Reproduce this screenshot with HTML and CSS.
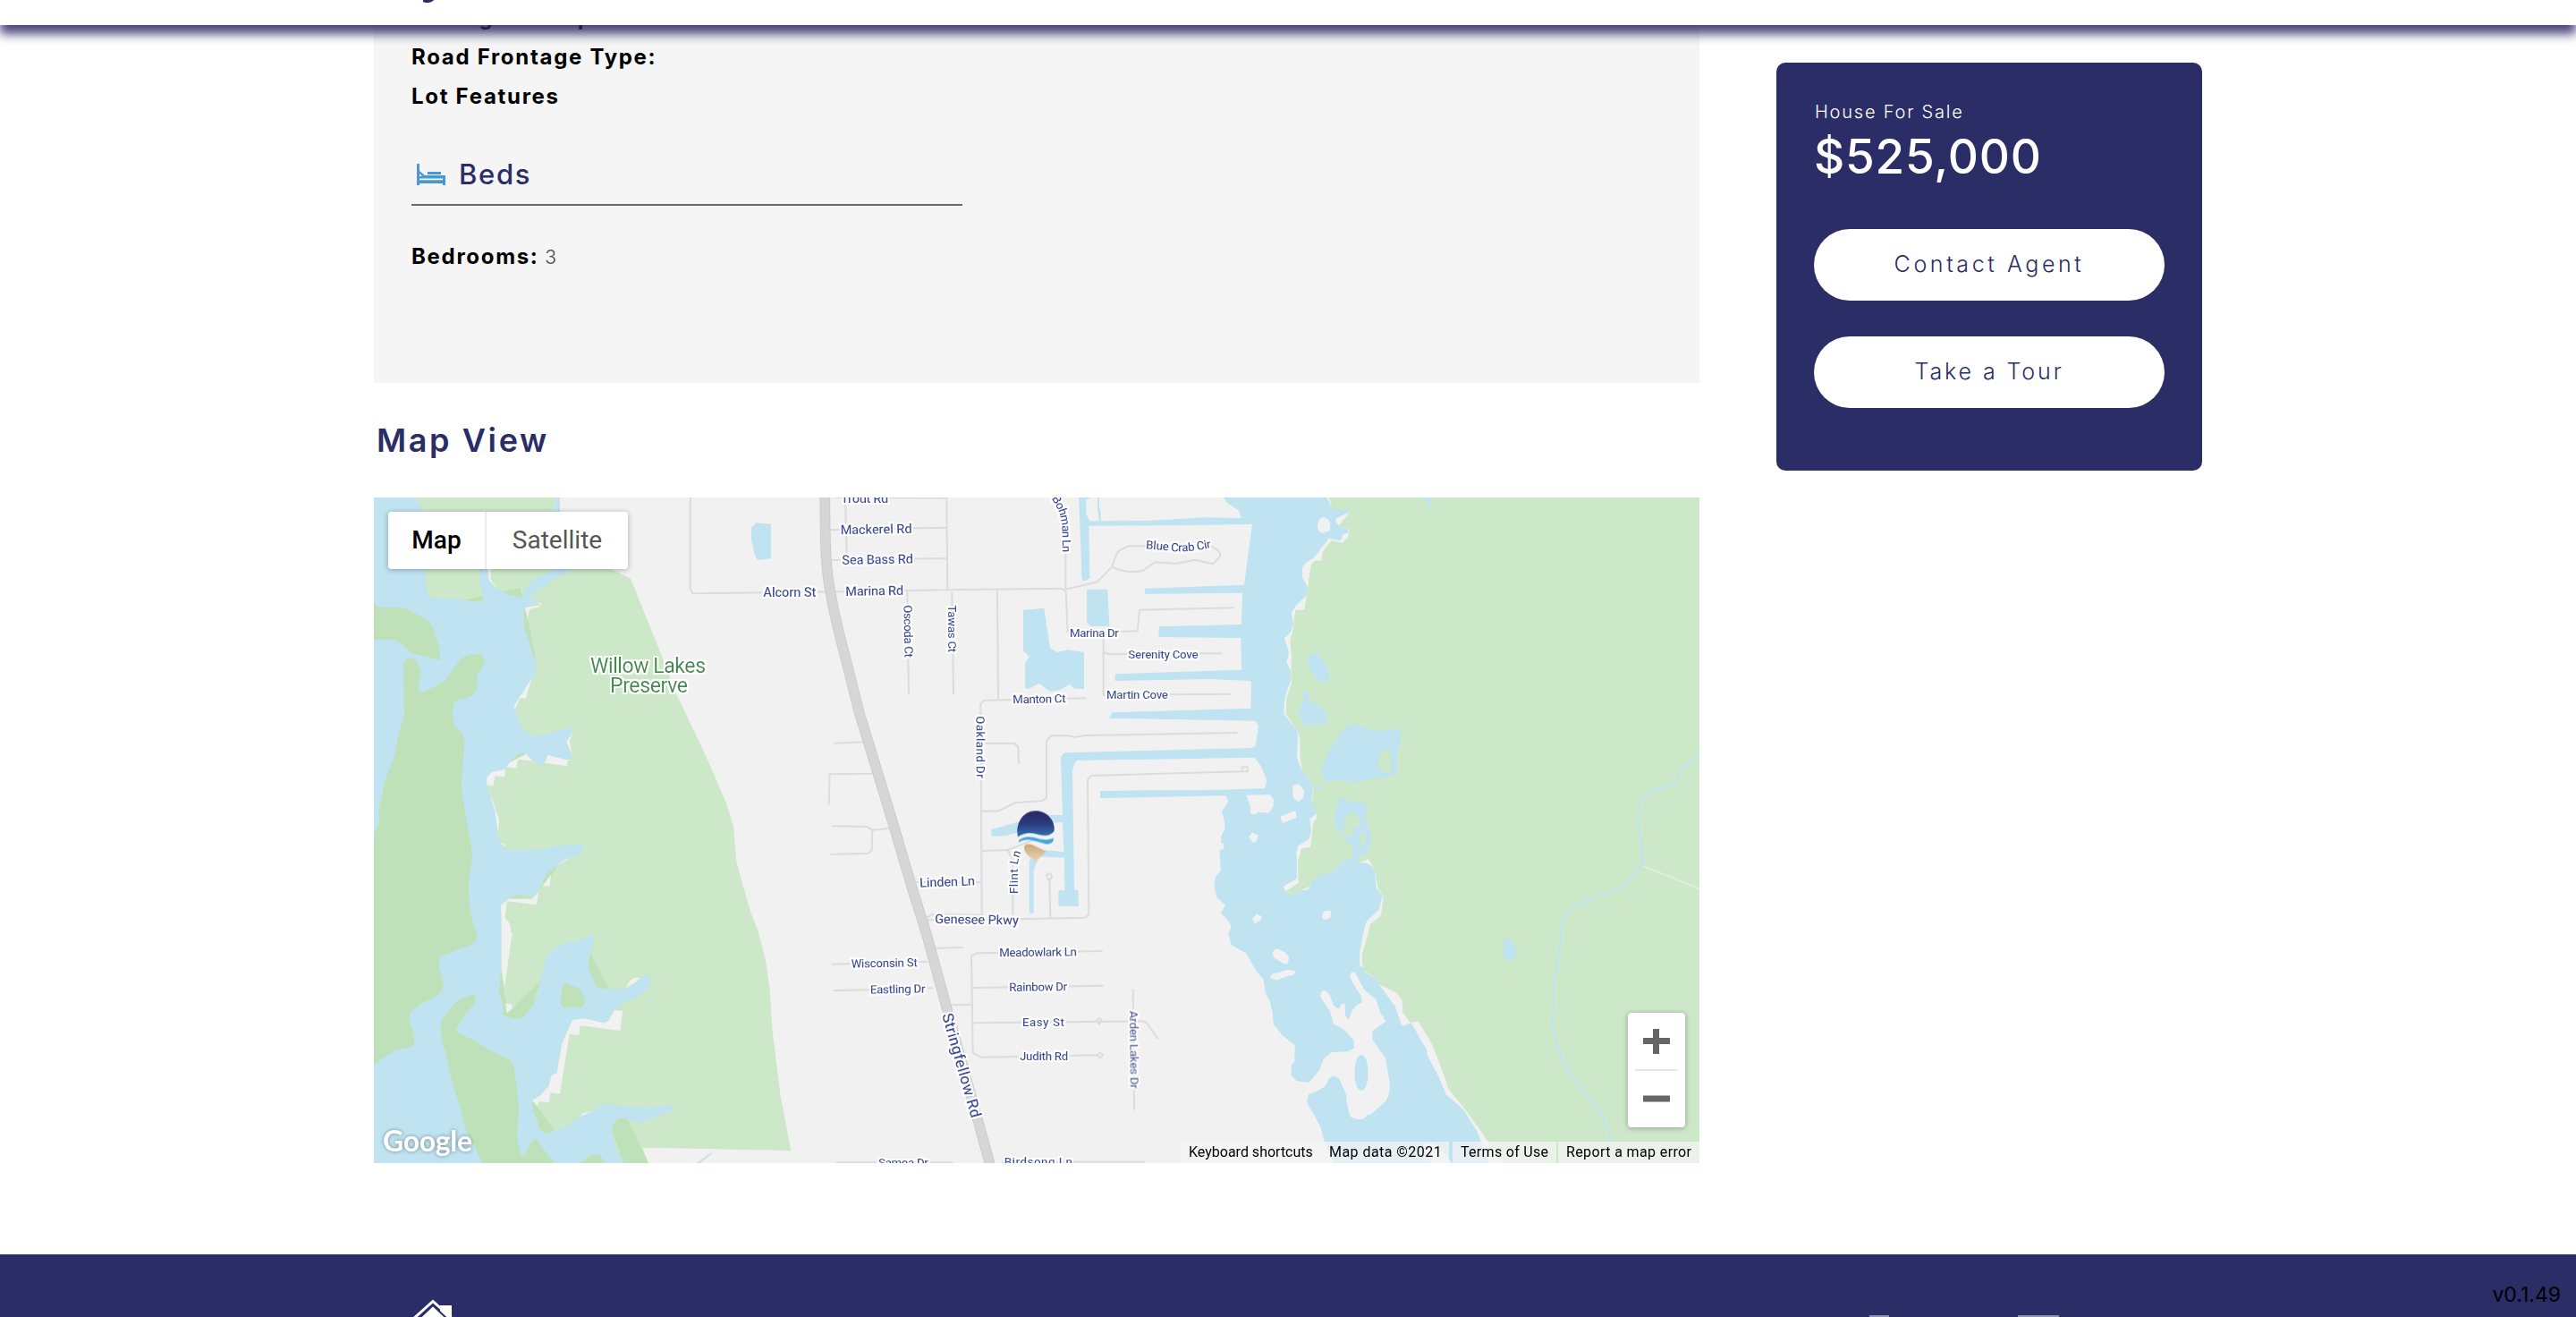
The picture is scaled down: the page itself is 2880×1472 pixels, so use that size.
FILE: index.html
```html
<!DOCTYPE html>
<html lang="en">
<head>
<meta charset="utf-8">
<title>House For Sale</title>
<link rel="stylesheet" href="styles.css">
</head>
<body>
<header class="site-header">
  <svg class="brand-tail" viewBox="0 0 12 3" aria-hidden="true"><path d="M0 0C2 2.200 8 2.200 11-1" fill="none" stroke="#2b2d67" stroke-width="3"/></svg>
</header>

<main class="listing">
  <div class="details">
    <section class="facts">
      <ul class="fact-list fact-list--lot">
        <li><b>Zoning Description:</b></li>
        <li><b>Road Frontage Type:</b></li>
        <li><b>Lot Features</b></li>
      </ul>
      <h3 class="fact-heading">
        <svg class="bed" viewBox="0 0 32 24" aria-hidden="true"><path fill="#4a98d3" d="M0 0h3v8l6 5h23v11h-3v-2H3v2H0zM3 17v1h26v-1zM12 9h15v3H12z"/><path fill="#f5f5f5" d="M3 11l3 3H3zM3 16.6h26v1.6H3z"/></svg>
        <span>Beds</span>
      </h3>
      <ul class="fact-list">
        <li><b>Bedrooms:</b> <span class="value">3</span></li>
      </ul>
    </section>

    <h2 class="map-title">Map View</h2>

    <div class="map">
      <svg class="map-canvas" viewBox="418 556 1482 744" aria-label="Map">
        <defs>
          <linearGradient id="sky" x1="0" y1="0" x2="0" y2="1"><stop offset="0" stop-color="#292763"/><stop offset=".5" stop-color="#2c3b7f"/><stop offset="1" stop-color="#2f76b7"/></linearGradient>
          <linearGradient id="sand" x1="0" y1="0" x2="0" y2="1"><stop offset="0" stop-color="#cda671"/><stop offset="1" stop-color="#e8d9c6"/></linearGradient>
          <filter id="halo" filterUnits="userSpaceOnUse" x="418" y="556" width="1482" height="744">
            <feMorphology in="SourceAlpha" operator="dilate" radius="2" result="fat"/>
            <feGaussianBlur in="fat" stdDeviation=".7" result="soft"/>
            <feFlood flood-color="#fff" flood-opacity=".92"/>
            <feComposite in2="soft" operator="in" result="glow"/>
            <feMerge><feMergeNode in="glow"/><feMergeNode in="SourceGraphic"/></feMerge>
          </filter>
          <path id="bohman" d="M826 22Q856 60 862 115L864 215"/>
          <path id="bluecrab" d="M543 191Q585 192 632 199Q690 203 775 184"/>
          <path id="flint" d="M713 1347L713 1265Q712 1235 732 1190"/>
        </defs>
        <rect class="land" x="418" y="556" width="1482" height="744"/>

        <g transform="translate(410 550) scale(.33333)">
          <path class="park" d="M24 18H632V258H820L885 290 990 550 1040 680 1140 890 1205 1040 1230 1120 1240 1240 1285 1400 1312 1470 1338 1570 1352 1670 1360 1800 1388 2025 1423 2208 925 2198 945 2250H24z"/>
          <path class="water" d="M632 18H648V100H632z"/>
          <path class="water" d="M24 18H165L190 65 193 258 205 350Q245 355 300 357L385 370 393 355Q376 300 375 258H405L410 295 435 325 475 345 522 355Q530 320 570 285L640 255H695L640 285 570 330 540 355 565 357 575 372 530 388 523 410 530 460 550 520 572 588 560 620 495 715 505 750 522 795 555 817 600 812 650 800 685 790 692 803 670 838 685 875 690 893 665 897 610 882 590 915H575L535 878 510 875 480 905 462 935 420 938 403 957V985L415 1020 430 1070 440 1130 442 1160 455 1185 475 1201 590 1197 670 1183 722 1182 729 1198 718 1212 680 1228 640 1250Q605 1285 580 1330L555 1360Q510 1340 475 1362L450 1385 452 1430V1600L443 1680 455 1710 458 1755 495 1767 525 1762 558 1720Q575 1690 590 1600L605 1555 630 1530 665 1510 715 1505 760 1480 762 1515 745 1550 742 1590 768 1658 820 1667 870 1665 905 1642 935 1617 948 1620 952 1640 945 1667 910 1692 860 1712 830 1737 812 1772 795 1780 730 1765 690 1770 685 1795 670 1815 655 1850 645 1900 638 1948 620 1955 610 1993 580 2025 555 2040 558 2080 572 2105 580 2137 605 2151 630 2143 680 2120 720 2090 760 2072 805 2050 880 2060 940 2063 1020 2054 1030 2068 985 2090 920 2115 860 2099 823 2145 830 2185 862 2250H24z"/>
          <path class="marsh" d="M24 370L40 387Q100 385 130 389L205 430 225 460 245 530 247 565 150 540Q110 500 90 495H24z"/>
          <path class="marsh" d="M123 570Q145 543 165 562L182 605 172 665 185 672Q235 650 265 630L310 565Q330 547 350 543L388 545 396 572 372 610 368 660Q360 682 345 687L295 702 288 735 293 785 318 803 329 835 318 980 320 1010 342 1140Q357 1210 352 1240L342 1310 345 1390 355 1440 370 1485 366 1505 350 1520 300 1537 245 1560 242 1590 257 1645 255 1670 225 1695 180 1717 148 1742 142 1770 157 1815 160 1850 145 1862 90 1875 45 1905 24 1922V1145L42 1110 40 1070 60 970 95 880 105 820 125 745z"/>
          <path class="marsh" d="M355 1685L366 1692 363 1715 330 1750 300 1802 302 1812 355 1835 420 1875 480 1903 493 1925 503 1990 511 2080 503 2160 517 2222 530 2225 550 2180 570 2167 590 2200 628 2245V2250H390L345 2165 330 2130 315 2070 290 1990 268 1900V1885L253 1845Q245 1800 252 1770L280 1730 310 1702z"/>
          <path class="marsh" d="M655 1658Q670 1638 680 1650L718 1668 732 1700Q735 1722 715 1729H665Q645 1725 652 1700zM715 2250L745 2225Q765 2218 783 2223L800 2250zM862 2250L823 2145 825 2125Q835 2095 870 2100L878 2108 945 2250zM450 1600L460 1670 475 1745 583 1638 558 1720 525 1762 495 1767 458 1755 455 1710 443 1680zM750 1545L812 1667 768 1658 742 1590zM555 2040L632 2143 605 2151 580 2137 572 2105 558 2080zM323 362L390 348 393 358 385 370zM455 332L515 322 522 355 475 345zM525 395L540 420 572 588 550 520 530 460zM605 1278L645 1247 610 1300 580 1330zM475 1362Q510 1340 555 1360zM480 905L510 875 535 878z"/>
          <path class="land" d="M532 388L588 377 578 368 580 385 546 393 540 427zM553 625L533 692 515 690 497 728 495 715zM692 803L680 838 690 880 670 838zM690 897L674 899 672 918 597 908 608 882 665 897zM480 907L535 878 557 902 508 896 502 926 470 922zM420 938L465 930 463 955 430 952 424 985 403 982V957zM413 1018L420 1030 445 1100 440 1140 430 1070zM450 1178L462 1180V1188zM618 1283L614 1322 590 1320zM640 1250L685 1225 665 1232zM475 1365H555L576 1340 570 1384 470 1372 464 1428Q485 1445 483 1475L488 1480 462 1660 452 1600V1430L450 1385zM466 1715L488 1718V1730L470 1747zM870 1663Q885 1620 915 1630L905 1642zM830 1737L858 1740 850 1806 715 1788 712 1821 680 1817 648 2018 616 2014 612 2047 577 2043 573 2058 555 2040 580 2025 610 1993 620 1955 638 1948 655 1850 670 1815 690 1770 730 1765 795 1780 812 1772zM185 65L190 75V60zM405 258L418 258 415 290 438 325 410 295zM715 2095L725 2083 755 2077z"/>
          <path class="water" d="M1290 120L1305 103 1356 107V223L1310 227 1300 205 1290 160zM1105 2250L1155 2215 1160 2217 1118 2250z"/>
        </g>

        <g transform="translate(1100 550) scale(.33333)">
          <path class="park" d="M1158 18L1168 57 1222 60V75L1190 112 1226 125 1222 150 1203 170 1165 162 1136 200 1132 230H1110L1097 245 1075 395H1045L1035 470 1027 500 1032 550 1030 590 1032 640 1015 690 1013 745 1050 800 1060 820V880L1068 935 1105 985 1102 1040 1118 1090 1105 1110 1095 1190 1065 1195 1053 1240 1055 1310 1010 1340 1032 1354 1060 1337 1290 1230 1311 1270 1322 1330 1340 1355 1332 1420 1295 1450 1285 1495 1268 1550 1270 1600 1320 1635 1325 1650 1385 1680 1403 1705 1405 1745 1430 1778 1458 1775 1505 1855 1530 1920 1560 2005 1610 2065 1665 2140 1740 2250H2400V18z"/>
          <path class="water" d="M318 18L325 180 328 285 333 297H343L355 287 352 113 620 112 900 108 873 311 540 323V343L560 341 868 338 863 444 588 451 586 486 862 489 864 596 440 610V633L760 627 893 633 897 640 895 725 430 739 421 758 910 767 921 783 911 852 900 858 270 874 258 888 264 1083 220 1083 110 1107 25 1132V1154L75 1152 130 1138 210 1110 264 1107 268 1207 200 1200 160 1228 152 1235V1412H167V1270L185 1222 270 1226 271 1335 250 1336V1388L318 1389 316 1335 303 1334 297 940Q300 905 315 900L908 890 930 920 950 968 942 993 800 998 390 1002V1026L810 1018 820 1035 798 1072 808 1110V1130L795 1155V1175L805 1180V1195L790 1202 795 1270 777 1290 772 1320 782 1360 810 1385 795 1412 822 1440 830 1460 820 1480 830 1518 880 1547 910 1600 938 1635 945 1680 960 1710 968 1745 972 1785 1000 1820 1043 1855 1042 1910 1032 1920 1030 1955 1050 1975 1090 1980 1130 1935H1180L1088 2020 1083 2045 1130 2130 1145 2190 1175 2250H1695L1655 2145 1608 2070 1550 2020 1525 1960 1488 1890 1485 1870 1433 1780 1408 1790 1400 1785 1380 1725 1325 1650 1320 1635 1280 1610 1260 1585V1550L1270 1490 1283 1440 1325 1400 1337 1355 1315 1325 1312 1275Q1300 1235 1252 1245L1255 1225 1285 1210 1298 1180 1297 1140 1278 1100 1285 1065 1270 1040H1222L1212 1020 1190 1030 1175 1090 1177 1120 1200 1150 1240 1195 1235 1225 1205 1237 1175 1268 1110 1293 1088 1332 1060 1337 1032 1354 1012 1340 1005 1322 1050 1295V1225L1047 1210 1055 1185 1090 1165 1098 1140 1093 1095 1113 1080V1060L1100 1035 1103 992 1130 998 1160 967 1200 967 1240 977 1270 967 1375 950 1387 935 1385 890 1401 805 1385 793 1318 803 1238 778 1215 787 1160 860 1129 935 1133 955 1150 968 1130 990 1105 985 1065 930 1050 890 1053 820 1050 800 1007 745Q1003 690 1030 630V600L1015 570 1023 540 1008 490 1030 468 1038 440 1032 410Q1035 385 1085 345V318L1068 285V255Q1075 235 1105 222L1157 155 1196 163 1205 140 1222 138V125L1190 112 1180 100 1181 88 1222 70V57H1168L1150 18H803L815 35 855 62 863 87 730 85 625 92 545 96 393 97 391 55 387 58V18H381V60L387 96 355 97 343 75V25L360 18z"/>
          <path class="park" d="M1320 895L1345 864 1362 862 1366 944 1329 933zM1220 1080L1240 1074 1265 1110 1262 1120 1240 1122 1238 1160 1210 1150Q1195 1110 1220 1080zM1260 1145L1272 1138 1283 1155 1272 1193 1262 1185z"/>
          <path class="water" d="M1085 552L1118 538 1131 545 1132 560 1148 577 1158 620 1150 642 1122 635 1090 592zM1070 665H1085L1092 700 1135 722Q1150 740 1152 778L1128 775 1080 788 1057 755 1060 715 1073 702zM132 396L202 389 222 523 248 537 280 529 336 537V660L305 659 287 644 258 662 223 669 185 641 150 660 138 657V575L152 552 132 532zM345 326H415L421 450H360L345 438zM1748 1490Q1780 1505 1785 1545 1775 1573 1762 1573 1745 1570 1740 1545zM1473 18L1495 52 1502 50 1498 18z"/>
          <path class="land" d="M1090 1980L1125 1940 1140 1900 1165 1878 1220 1876 1242 1865 1240 1838 1205 1800 1173 1783 1160 1740 1130 1695Q1125 1670 1145 1670L1160 1685 1173 1722 1190 1733 1198 1718 1211 1715 1212 1755 1225 1770Q1230 1728 1268 1710L1265 1690 1240 1650 1227 1625Q1228 1607 1245 1610L1275 1668 1315 1700 1330 1745 1348 1775 1303 1807V1835L1348 1900 1362 1990Q1360 2030 1345 2045L1300 2085 1285 2090Q1265 2115 1230 2095 1218 2070 1215 2020L1190 1965 1170 1957 1155 1970Q1150 2000 1088 2020L1070 1990z"/>
          <ellipse class="water" cx="1266" cy="1947" rx="23" ry="60"/>
          <path class="land" d="M880 1016L960 1014 971 1030V1055L955 1076 918 1073 912 1080H895L892 1050zM1035 985L1055 978 1075 1002 1072 1025 1053 1039 1038 1025zM994 1088L1045 1068 1049 1092 1002 1109zM888 1155L900 1142 920 1150 915 1170 902 1177zM900 1430L915 1415 932 1422 930 1435 908 1447zM1135 1412L1145 1404H1163V1425L1150 1434 1135 1430zM968 1550Q970 1530 985 1532L1010 1542 1023 1560 1020 1580 1010 1584 975 1562zM960 1625Q965 1612 990 1612 1020 1595 1045 1607 1045 1620 1020 1622L985 1636Q965 1635 960 1625zM1120 105Q1125 83 1140 85 1160 90 1161 105V130L1132 137Q1115 125 1120 105zM1475 2190Q1500 2175 1530 2200L1570 2250H1500z"/>
          <path class="trail" d="M2208 1252L2400 1330"/>
          <path class="river" d="M2400 885L2350 918Q2328 935 2328 955 2325 975 2310 980L2255 995Q2200 1020 2195 1070L2203 1170 2210 1250 2150 1320 1975 1390Q1930 1450 1935 1500L1920 1600 1910 1650 1912 1730 1905 1760Q1915 1860 1950 1920L1965 1950 2005 2000 2060 2065 2095 2145 2098 2180 2115 2250"/>
        </g>

        <g class="roads" transform="translate(900 550) scale(.33333)">
          <path d="M-385 18V325L-377 340 135 334 340 330 480 328 860 323 875 333 881 468 990 470 1115 466 1122 395 1440 388M100 18L475 20M135 18L140 210M475 18L478 328M86 127L475 119M90 228L475 222M874 180V326L980 301 1030 250Q1045 200 1055 195L1085 181 1355 179Q1395 195 1393 215L1368 241 1308 227 1245 240 1175 235 1130 264Q1080 275 1030 250M343 335L348 680M493 335L498 680M645 328L648 695M945 691L600 698 589 710 593 1420M1001 470V680L1430 677M1001 538L1020 543 1398 541M604 843H702L715 855 717 912M593 1070L648 1069 705 1042 795 1035 810 1025V835L825 817 880 816 905 822 940 816 1450 807M1468 937L960 951 948 965 952 1415 940 1427 715 1432 400 1435M1466 922H1484V937H1466zM595 1203L680 1200 770 1165M680 1200L697 1235V1420M592 1308H370M402 1430L430 1415 600 1418M97 842L200 838M230 944L83 946 80 1048M90 1120L208 1122 226 1133 280 1128M226 1133L224 1200 212 1211 85 1215M430 1530L530 1526M90 1583L410 1574M95 1672L430 1663M485 1720L557 1718M998 1539L578 1546 558 1555 563 1880 590 1895 980 1888M560 1662L1002 1655M564 1780L1130 1774Q1145 1776 1150 1785L1185 1835M1100 1666L1104 2072M820 1300L823 1430M810 1285L820 1278 829 1287 823 1298H815zM976 1773L987 1764 997 1773 987 1784zM979 1888L990 1879 999 1888 990 1898zM105 2248H495M660 2246H1140"/>
          <path class="highway-edge" d="M67 10C67 200 72 270 86 340 100 420 118 490 137 560L182 740 213 840 295 1110 357 1320 410 1490 470 1710 545 1980 622 2260"/>
          <path class="highway" d="M67 10C67 200 72 270 86 340 100 420 118 490 137 560L182 740 213 840 295 1110 357 1320 410 1490 470 1710 545 1980 622 2260"/>
        </g>

        <g filter="url(#halo)">
        <g class="labels" transform="translate(900 550) scale(.33333)">
          <text x="-140" y="352" textLength="177">Alcorn St</text>
          <text x="120" y="36" textLength="160">Trout Rd</text>
          <text x="119" y="142" textLength="240" transform="rotate(-1 119 142)">Mackerel Rd</text>
          <text x="124" y="243" textLength="239" transform="rotate(-1 124 243)">Sea Bass Rd</text>
          <text x="136" y="348" textLength="195" transform="rotate(-1 136 348)">Marina Rd</text>
          <text x="888" y="486" textLength="165" class="sm">Marina Dr</text>
          <text x="1084" y="557" textLength="235" class="sm">Serenity Cove</text>
          <text x="1011" y="693" textLength="207" class="sm">Martin Cove</text>
          <text x="697" y="709" textLength="178" class="sm" transform="rotate(-1 697 709)">Manton Ct</text>
          <text class="sm"><textPath href="#bohman" textLength="188">Bohman Ln</textPath></text>
          <g transform="translate(600 0)"><text class="sm"><textPath href="#bluecrab" textLength="222">Blue Crab Cir</textPath></text></g>
          <text class="sm"><textPath href="#flint" textLength="142">Flint Ln</textPath></text>
          <text class="sm" textLength="176" transform="translate(331 379) rotate(89)">Oscoda Ct</text>
          <text class="sm" textLength="159" transform="translate(481 379) rotate(90)">Tawas Ct</text>
          <text class="sm" textLength="209" transform="translate(574 751) rotate(89.7)">Oakland Dr</text>
          <text class="sm" textLength="262" transform="translate(1088 1739) rotate(89.5)">Arden Lakes Dr</text>
          <text x="385" y="1325" textLength="186" transform="rotate(-2 385 1325)">Linden Ln</text>
          <text x="435" y="1446" textLength="282" transform="rotate(1 435 1446)">Genesee Pkwy</text>
          <text x="652" y="1558" textLength="260" class="sm" transform="rotate(-.6 652 1558)">Meadowlark Ln</text>
          <text x="685" y="1674" textLength="195" class="sm" transform="rotate(-.6 685 1674)">Rainbow Dr</text>
          <text x="729" y="1792" textLength="141" class="sm">Easy St</text>
          <text x="720" y="1906" textLength="163" class="sm">Judith Rd</text>
          <text x="155" y="1595" textLength="223" class="sm" transform="rotate(-1 155 1595)">Wisconsin St</text>
          <text x="219" y="1682" textLength="185" class="sm" transform="rotate(-1 219 1682)">Eastling Dr</text>
          <text x="246" y="2263" textLength="168" class="sm">Samoa Dr</text>
          <text x="668" y="2260" textLength="229" class="sm">Birdsong Ln</text>
          <text class="lg" textLength="362" transform="translate(459 1753) rotate(74.2)">Stringfellow Rd</text>
        </g>
        <g class="park-label">
          <text x="660" y="751.5" textLength="129">Willow Lakes</text>
          <text x="682" y="774" textLength="87">Preserve</text>
        </g>
        </g>

        <g transform="translate(1050 860) scale(.33333)">
          <path fill="url(#sky)" d="M264 226C255 190 275 139 323 139 368 139 392 180 385 208 370 225 350 223 325 216 300 209 280 215 264 226z"/>
          <path fill="#43a5df" d="M267 238C285 221 310 225 330 231S370 237 384 230C384 244 377 252 355 249 325 243 300 226 267 244z"/>
          <path fill="url(#sand)" d="M285 265C283 249 300 248 315 254L359 275 323 311C305 293 287 283 285 265z"/>
        </g>
        <text class="google" x="428" y="1287" textLength="100">Google</text>
      </svg>

      <div class="map-type">
        <button class="map-type-option is-active">Map</button>
        <button class="map-type-option">Satellite</button>
      </div>
      <div class="map-zoom">
        <svg viewBox="0 0 30 28" class="zoom-glyph"><path d="M11 0h7v10h12v7H18v11h-7V17H0v-7h11z"/></svg>
        <span class="zoom-rule"></span>
        <svg viewBox="0 0 30 28" class="zoom-glyph"><path d="M0 10.500h30v7H0z"/></svg>
      </div>
      <div class="map-legal">
        <span class="legal-keys">Keyboard shortcuts</span>
        <span class="legal-data">Map data ©2021</span>
        <span class="legal-terms">Terms of Use</span>
        <span class="legal-report">Report a map error</span>
      </div>
    </div>
  </div>

  <aside class="offer">
    <p class="offer-kind">House For Sale</p>
    <p class="offer-price">$525,000</p>
    <button class="offer-button">Contact Agent</button>
    <button class="offer-button offer-button--tour">Take a Tour</button>
  </aside>
</main>

<footer class="site-footer">
  <svg class="footer-house" viewBox="0 0 80 20" aria-hidden="true"><path d="M48 7h13v13H48z" fill="#fff"/><path d="M16 24L40 2.500 64 24" fill="none" stroke="#fff" stroke-width="3"/><path d="M22 24L40 7 58 24z" fill="#fff" stroke="#2b2d67" stroke-width="2"/></svg>
  <div class="footer-tops"><i></i><i class="wide"></i></div>
  <span class="version">v0.1.49</span>
</footer>
</body>
</html>
```
FILE: styles.css
```css
* { box-sizing: border-box; }

body {
  margin: 0;
  height: 1472px;
  display: flex;
  flex-direction: column;
  overflow: hidden;
  background: #fff;
  color: #000;
  font-family: Inter, "Open Sans", sans-serif;
}

ul, p, h2, h3 { margin: 0; padding: 0; }
ul { list-style: none; }
button { border: 0; padding: 0; font: inherit; background: #fff; }

.site-header {
  position: relative;
  z-index: 2;
  flex: none;
  height: 28px;
  padding-left: 473px;
  background: #fff;
  box-shadow: 0 10px 12px rgba(41, 38, 99, .85);
}
.brand-tail { display: block; width: 12px; height: 3px; }

.listing {
  flex: none;
  display: flex;
  align-items: flex-start;
  gap: 86px;
  height: 1374px;
  padding-left: 418px;
}
.details { width: 1482px; }

.facts {
  height: 400px;
  padding-left: 42px;
  background: #f5f5f5;
}
.fact-list { padding-top: 35px; font-size: 24px; line-height: 44px; }
.fact-list--lot { padding-top: 0; }
.fact-list li { height: 44px; white-space: nowrap; }
.fact-list--lot li:first-child { display: flex; align-items: flex-end; height: 14px; }
.fact-list b { font-weight: 700; letter-spacing: 1.7px; }
.value { font-size: 21px; font-weight: 300; color: #444; }

.fact-heading {
  width: 616px;
  height: 100px;
  padding: 43px 0 11px 6px;
  display: flex;
  align-items: center;
  gap: 15px;
  border-bottom: 2px solid #6a6c6a;
  font-size: 31px;
  font-weight: 500;
  line-height: 44px;
  letter-spacing: 1.7px;
  color: #2b2d67;
}
.bed { width: 32px; height: 24px; }

.map-title {
  padding: 40px 0 40px 3px;
  font-size: 36px;
  line-height: 48px;
  font-weight: 600;
  letter-spacing: 2.6px;
  color: #2b2d67;
}

.map { position: relative; height: 744px; }
.map-canvas { display: block; width: 1482px; height: 744px; }
.land { fill: #f1f1f1; }
.park { fill: #cde8c8; }
.marsh { fill: #bfe1b9; }
.water { fill: #bfe3f1; }
.river { fill: none; stroke: #bfe3f1; stroke-width: 7; }
.trail { fill: none; stroke: #e0ecdc; stroke-width: 6; }
.roads path { fill: none; stroke: #dcdcdc; stroke-width: 6; }
.roads .highway-edge { stroke: #c9c9c9; stroke-width: 35; }
.roads .highway { stroke: #d6d6d6; stroke-width: 30; }
.labels text {
  font: 500 44px Roboto, sans-serif;
  fill: #3d4f9b;
}
.labels .sm { font-size: 40px; }
.labels .lg { font-size: 52px; }
.park-label text {
  font: 400 23px Roboto, sans-serif;
  fill: #43894f;
}
.google {
  font: 700 32px Lato, sans-serif;
  fill: #fff;
  filter: drop-shadow(0 0 2px rgba(0, 0, 0, .4));
}

.map-type {
  position: absolute;
  left: 16px;
  top: 16px;
  display: flex;
  height: 64px;
  font: 28px/64px Roboto, sans-serif;
  border-radius: 4px;
  box-shadow: 0 1px 6px rgba(0, 0, 0, .3);
}
.map-type-option { width: 158px; padding-bottom: 3px; color: #565656; border-radius: 0 4px 4px 0; }
.map-type-option.is-active {
  width: 110px;
  color: #000;
  font-weight: 500;
  border-radius: 4px 0 0 4px;
  border-right: 2px solid #ececec;
}

.map-zoom {
  position: absolute;
  right: 16px;
  bottom: 40px;
  width: 64px;
  height: 128px;
  padding: 18px 0;
  display: flex;
  flex-direction: column;
  align-items: center;
  gap: 17px;
  background: #fff;
  border-radius: 4px;
  box-shadow: 0 1px 6px rgba(0, 0, 0, .3);
}
.zoom-glyph { width: 30px; height: 28px; fill: #666; }
.zoom-rule { width: 48px; height: 2px; background: #e6e6e6; }

.map-legal {
  position: absolute;
  right: 0;
  bottom: 0;
  display: flex;
  height: 24px;
  font: 16px/24px Roboto, sans-serif;
  white-space: nowrap;
}
.map-legal span { padding-left: 9px; background: rgba(245, 245, 245, .72); }
.legal-keys { width: 157px; }
.legal-data { width: 143px; margin-right: 4px; letter-spacing: .45px; }
.legal-terms { width: 116px; margin-right: 2px; letter-spacing: .3px; }
.legal-report { width: 158px; letter-spacing: .38px; }

.offer {
  width: 476px;
  height: 456px;
  margin-top: 42px;
  padding: 41px 42px 0;
  border-radius: 10px;
  background: #2b2d67;
  color: #fff;
}
.offer-kind { padding-left: 1px; font-size: 20px; line-height: 28px; letter-spacing: 1.8px; font-weight: 300; }
.offer-price { margin-top: 4px; font-size: 53px; line-height: 64px; font-weight: 500; letter-spacing: .8px; }
.offer-button {
  display: block;
  width: 392px;
  height: 80px;
  margin-top: 49px;
  padding-bottom: 2px;
  border-radius: 40px;
  font-size: 25px;
  font-weight: 300;
  letter-spacing: 3.6px;
  color: #2b2d67;
}
.offer-button--tour { margin-top: 40px; letter-spacing: 2.9px; }

.site-footer {
  flex: none;
  height: 70px;
  display: flex;
  align-items: flex-end;
  padding: 0 17px 0 444px;
  background: #2b2d67;
}
.footer-house { width: 80px; height: 20px; }
.footer-tops { display: flex; gap: 144px; margin-left: 1566px; }
.footer-tops i { width: 22px; height: 2px; background: #8f90b0; }
.footer-tops .wide { width: 46px; }
.version { margin-left: auto; padding-bottom: 11px; font-size: 23px; line-height: 28px; color: #000; }
```
